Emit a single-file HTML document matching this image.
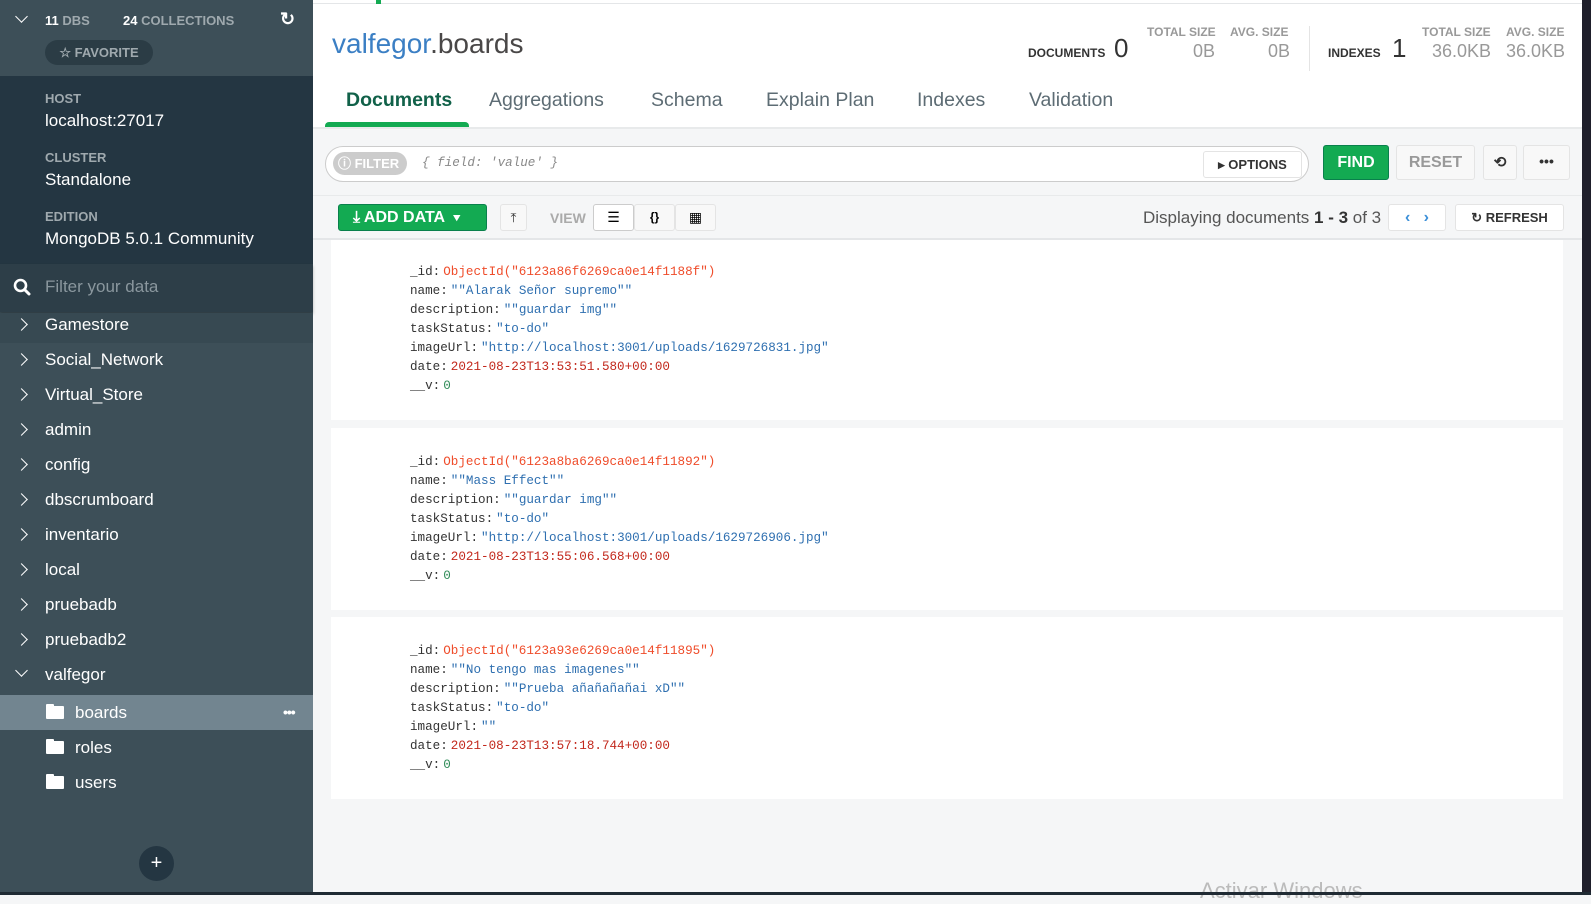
<!DOCTYPE html>
<html><head><meta charset="utf-8"><style>
*{box-sizing:border-box;margin:0;padding:0}
body{width:1591px;height:895px;overflow:hidden;background:#f5f6f7;font-family:"Liberation Sans",Arial,sans-serif;position:relative}
.a{position:absolute}
#sb{left:0;top:0;width:313px;height:895px;background:#3d4f58;color:#fff}
.top{left:0;top:0;width:313px;height:76px;background:#3d4f58}
.inst{left:0;top:76px;width:313px;height:188px;background:#243642}
.lbl{font-size:13px;font-weight:bold;color:#9fa9ae}
.val{font-size:17px;color:#fff}
.item{left:0;width:313px;height:35px;font-size:17px;color:#fff;line-height:23px;padding-left:45px}
.chev{position:absolute;left:17px;top:7px;width:9px;height:9px;border-right:1.6px solid #fff;border-bottom:1.6px solid #fff;transform:rotate(-45deg)}
.chev.d{transform:rotate(45deg);top:3px}
.fold{position:absolute;left:46px;top:11px;width:18px;height:13px;background:#fff;border-radius:1px}
.fold:before{content:"";position:absolute;left:0;top:-2px;width:8px;height:3px;background:#fff;border-radius:1px 1px 0 0}
.sub{line-height:35px}
.tab{font-size:19.5px;color:#5d6c74;top:89px}
.mono{font-family:"Liberation Mono",monospace;font-size:12.6px;line-height:19px}
.card{left:331px;width:1232px;background:#fff}
.k{color:#333}.s{color:#2e6fb0}.r{color:#ef4c2a}.d{color:#c2281c}.n{color:#2e8b57}
.mono .s,.mono .r,.mono .d,.mono .n{margin-left:3px}
.btn{border:1px solid #e4e4e4;background:#f8f8f8;border-radius:3px;text-align:center}
</style></head><body>
<div id="sb" class="a">
 <div class="a top">
  <div class="a" style="left:17px;top:12px;width:9px;height:9px;border-right:1.6px solid #fff;border-bottom:1.6px solid #fff;transform:rotate(45deg)"></div>
  <div class="a" style="left:45px;top:13px;font-size:13px;font-weight:bold;color:#9fa9ae"><span style="color:#fff">11</span> DBS</div>
  <div class="a" style="left:123px;top:13px;font-size:13px;font-weight:bold;color:#9fa9ae"><span style="color:#fff">24</span> COLLECTIONS</div>
  <div class="a" style="left:280px;top:9px;font-size:18px;font-weight:bold;color:#fff">↻</div>
  <div class="a" style="left:45px;top:40px;width:108px;height:25px;border-radius:13px;background:#2b3c45;font-size:13px;font-weight:bold;color:#9fa9ae;line-height:25px;text-align:center">☆ FAVORITE</div>
 </div>
 <div class="a inst">
  <div class="a lbl" style="left:45px;top:15px">HOST</div>
  <div class="a val" style="left:45px;top:35px">localhost:27017</div>
  <div class="a lbl" style="left:45px;top:74px">CLUSTER</div>
  <div class="a val" style="left:45px;top:94px">Standalone</div>
  <div class="a lbl" style="left:45px;top:133px">EDITION</div>
  <div class="a val" style="left:45px;top:153px">MongoDB 5.0.1 Community</div>
 </div>
 <div class="a" style="left:0;top:264px;width:313px;height:48px;background:#2d3e48;box-shadow:0 2px 3px rgba(0,0,0,.25)">
  <svg class="a" style="left:13px;top:14px" width="18" height="18" viewBox="0 0 18 18"><circle cx="7.5" cy="7.5" r="5.5" fill="none" stroke="#fff" stroke-width="2.6"/><line x1="11.5" y1="11.5" x2="16" y2="16" stroke="#fff" stroke-width="3" stroke-linecap="round"/></svg>
  <div class="a" style="left:45px;top:13px;font-size:17px;color:#8a979e">Filter your data</div>
 </div>
 <div class="a" style="left:0;top:313px;width:313px;height:30px;background:#374952"></div>
 <div class="a item" style="top:313px"><span class="chev"></span>Gamestore</div>
 <div class="a item" style="top:348px"><span class="chev"></span>Social_Network</div>
 <div class="a item" style="top:383px"><span class="chev"></span>Virtual_Store</div>
 <div class="a item" style="top:418px"><span class="chev"></span>admin</div>
 <div class="a item" style="top:453px"><span class="chev"></span>config</div>
 <div class="a item" style="top:488px"><span class="chev"></span>dbscrumboard</div>
 <div class="a item" style="top:523px"><span class="chev"></span>inventario</div>
 <div class="a item" style="top:558px"><span class="chev"></span>local</div>
 <div class="a item" style="top:593px"><span class="chev"></span>pruebadb</div>
 <div class="a item" style="top:628px"><span class="chev"></span>pruebadb2</div>
 <div class="a item" style="top:663px"><span class="chev d"></span>valfegor</div>
 <div class="a item sub" style="top:695px;background:#728590;padding-left:75px"><span class="fold"></span>boards<span class="a" style="left:283px;top:0;font-size:14px;font-weight:bold;letter-spacing:-1px">•••</span></div>
 <div class="a item sub" style="top:730px;padding-left:75px"><span class="fold"></span>roles</div>
 <div class="a item sub" style="top:765px;padding-left:75px"><span class="fold"></span>users</div>
 <div class="a" style="left:139px;top:846px;width:35px;height:35px;border-radius:50%;background:#243642;color:#fff;font-size:20px;text-align:center;line-height:34px">+</div>
</div>
<!-- main -->
<div class="a" style="left:313px;top:0;width:1269px;height:129px;background:#fff;border-bottom:2px solid #e8eaeb"></div>
<div class="a" style="left:313px;top:0;width:313px;height:4px;border-bottom:1px solid #e4e6e8"></div>
<div class="a" style="left:626px;top:3px;width:956px;height:1px;background:#e4e6e8"></div>
<div class="a" style="left:376px;top:0;width:5px;height:4px;background:#13aa52"></div>
<div class="a" style="left:332px;top:28px;font-size:28px;color:#494747"><span style="color:#3b7fc4">valfegor</span>.boards</div>
<div class="a" style="left:1028px;top:46px;font-size:12px;font-weight:bold;color:#333">DOCUMENTS</div>
<div class="a" style="left:1114px;top:33px;font-size:26px;color:#333">0</div>
<div class="a" style="left:1147px;top:25px;font-size:12px;font-weight:bold;color:#999">TOTAL SIZE</div>
<div class="a" style="left:1193px;top:41px;font-size:18px;color:#999">0B</div>
<div class="a" style="left:1230px;top:25px;font-size:12px;font-weight:bold;color:#999">AVG. SIZE</div>
<div class="a" style="left:1268px;top:41px;font-size:18px;color:#999">0B</div>
<div class="a" style="left:1309px;top:26px;width:1px;height:45px;background:#e4e4e4"></div>
<div class="a" style="left:1328px;top:46px;font-size:12px;font-weight:bold;color:#333">INDEXES</div>
<div class="a" style="left:1392px;top:33px;font-size:26px;color:#333">1</div>
<div class="a" style="left:1422px;top:25px;font-size:12px;font-weight:bold;color:#999">TOTAL SIZE</div>
<div class="a" style="left:1432px;top:41px;font-size:18px;color:#999">36.0KB</div>
<div class="a" style="left:1506px;top:25px;font-size:12px;font-weight:bold;color:#999">AVG. SIZE</div>
<div class="a" style="left:1506px;top:41px;font-size:18px;color:#999">36.0KB</div>
<div class="a tab" style="left:346px;color:#116149;font-weight:bold">Documents</div>
<div class="a tab" style="left:489px">Aggregations</div>
<div class="a tab" style="left:651px">Schema</div>
<div class="a tab" style="left:766px">Explain Plan</div>
<div class="a tab" style="left:917px">Indexes</div>
<div class="a tab" style="left:1029px">Validation</div>
<div class="a" style="left:325px;top:122px;width:144px;height:5px;background:#13aa52;border-radius:4px 4px 0 0"></div>
<!-- filter -->
<div class="a" style="left:325px;top:146px;width:984px;height:36px;background:#fff;border:1px solid #ccc;border-radius:18px"></div>
<div class="a" style="left:333px;top:152px;width:74px;height:23px;border-radius:12px;background:#ccc;color:#fff;font-size:13px;font-weight:bold;line-height:23px;padding-left:5px;white-space:nowrap">ⓘ FILTER</div>
<div class="a mono" style="left:422px;top:154px;color:#888;font-style:italic">{ field: 'value' }</div>
<div class="a btn" style="left:1203px;top:151px;width:99px;height:27px;background:#fff;font-size:13px;font-weight:bold;color:#333;line-height:25px">▸ OPTIONS</div>
<div class="a" style="left:1323px;top:145px;width:66px;height:35px;background:#13aa52;border:1px solid #09804c;border-radius:3px;color:#fff;font-size:16px;font-weight:bold;text-align:center;line-height:33px">FIND</div>
<div class="a btn" style="left:1396px;top:145px;width:79px;height:35px;font-size:16px;font-weight:bold;color:#999;line-height:33px">RESET</div>
<div class="a btn" style="left:1483px;top:145px;width:34px;height:35px;font-size:15px;font-weight:bold;color:#333;line-height:33px">⟲</div>
<div class="a btn" style="left:1523px;top:145px;width:47px;height:35px;font-size:14px;font-weight:bold;color:#333;line-height:30px">•••</div>
<div class="a" style="left:313px;top:195px;width:1269px;height:1px;background:#e8eaeb"></div>
<!-- toolbar -->
<div class="a" style="left:338px;top:204px;width:149px;height:27px;background:#13aa52;border:1px solid #09804c;border-radius:3px;color:#fff;font-size:16px;font-weight:bold;line-height:25px;padding-left:14px">⤓ ADD DATA &nbsp;▾</div>
<div class="a btn" style="left:500px;top:204px;width:27px;height:27px;font-size:13px;line-height:25px;color:#333">⤒</div>
<div class="a" style="left:550px;top:210px;font-size:14px;font-weight:bold;color:#aaa">VIEW</div>
<div class="a btn" style="left:593px;top:204px;width:41px;height:27px;background:#fff;border-color:#ccc;font-size:14px;line-height:25px">☰</div>
<div class="a btn" style="left:634px;top:204px;width:41px;height:27px;font-size:12px;font-weight:bold;line-height:25px">{}</div>
<div class="a btn" style="left:675px;top:204px;width:41px;height:27px;font-size:14px;line-height:25px">▦</div>
<div class="a" style="left:1143px;top:208px;font-size:17px;color:#555">Displaying documents <span style="color:#333;font-weight:bold">1 - 3</span> of 3</div>
<div class="a btn" style="left:1388px;top:204px;width:58px;height:27px;background:#fff;color:#3b8fd8;font-size:16px;font-weight:bold;line-height:25px">‹ &nbsp; ›</div>
<div class="a btn" style="left:1455px;top:204px;width:109px;height:27px;background:#fff;font-size:13px;font-weight:bold;color:#333;line-height:25px">↻ REFRESH</div>
<div class="a" style="left:313px;top:238px;width:1269px;height:2px;background:#e4e6e8"></div>
<!-- docs -->
<div class="a card" style="top:240px;height:180px"></div>
<div class="a card" style="top:428px;height:182px"></div>
<div class="a card" style="top:617px;height:182px"></div>
<div class="a mono" style="left:410px;top:263px;white-space:pre"><span class="k">_id:</span><span class="r">ObjectId("6123a86f6269ca0e14f1188f")</span>
<span class="k">name:</span><span class="s">""Alarak Señor supremo""</span>
<span class="k">description:</span><span class="s">""guardar img""</span>
<span class="k">taskStatus:</span><span class="s">"to-do"</span>
<span class="k">imageUrl:</span><span class="s">"http://localhost:3001/uploads/1629726831.jpg"</span>
<span class="k">date:</span><span class="d">2021-08-23T13:53:51.580+00:00</span>
<span class="k">__v:</span><span class="n">0</span></div>
<div class="a mono" style="left:410px;top:453px;white-space:pre"><span class="k">_id:</span><span class="r">ObjectId("6123a8ba6269ca0e14f11892")</span>
<span class="k">name:</span><span class="s">""Mass Effect""</span>
<span class="k">description:</span><span class="s">""guardar img""</span>
<span class="k">taskStatus:</span><span class="s">"to-do"</span>
<span class="k">imageUrl:</span><span class="s">"http://localhost:3001/uploads/1629726906.jpg"</span>
<span class="k">date:</span><span class="d">2021-08-23T13:55:06.568+00:00</span>
<span class="k">__v:</span><span class="n">0</span></div>
<div class="a mono" style="left:410px;top:642px;white-space:pre"><span class="k">_id:</span><span class="r">ObjectId("6123a93e6269ca0e14f11895")</span>
<span class="k">name:</span><span class="s">""No tengo mas imagenes""</span>
<span class="k">description:</span><span class="s">""Prueba añañañañai xD""</span>
<span class="k">taskStatus:</span><span class="s">"to-do"</span>
<span class="k">imageUrl:</span><span class="s">""</span>
<span class="k">date:</span><span class="d">2021-08-23T13:57:18.744+00:00</span>
<span class="k">__v:</span><span class="n">0</span></div>
<div class="a" style="left:1200px;top:878px;font-size:22px;color:#bbb">Activar Windows</div>
<div class="a" style="left:1582px;top:0;width:9px;height:895px;background:#1f1f2b"></div>
<div class="a" style="left:0;top:892px;width:1591px;height:3px;background:#1f2a33"></div>
</body></html>
